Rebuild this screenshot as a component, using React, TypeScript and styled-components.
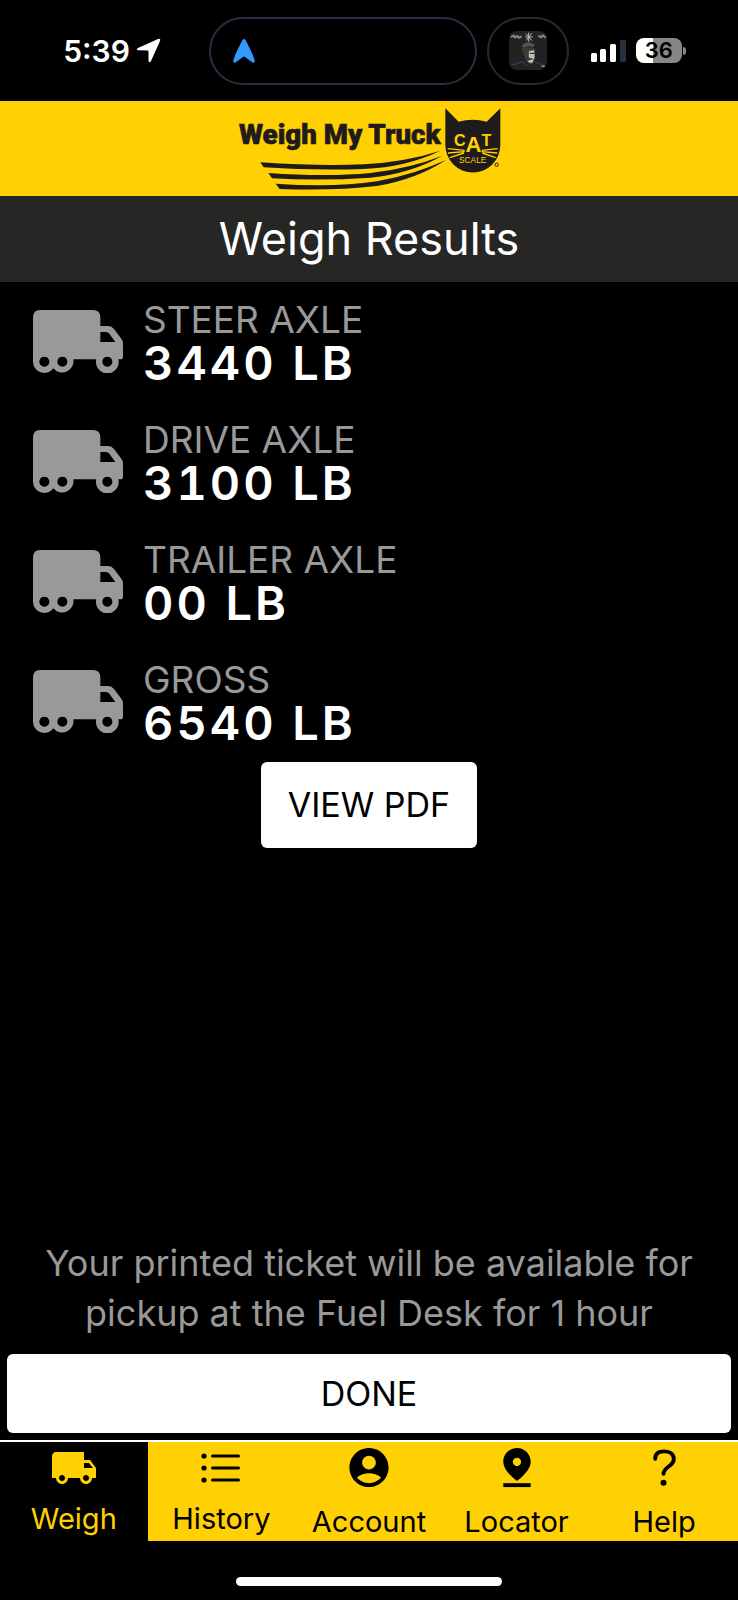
import { ReactNode } from "react";
import { MdAccountCircle, MdLocalShipping } from "react-icons/md";
import styled, { createGlobalStyle } from "styled-components";

const YELLOW = "#ffd103";

const GlobalStyle = createGlobalStyle`
  * {
    box-sizing: border-box;
    margin: 0;
    padding: 0;
  }
  body {
    background-color: #000;
    font-family: Inter, "Liberation Sans", sans-serif;
    color: #fff;
  }
  button {
    border: none;
    font-family: inherit;
    cursor: pointer;
  }
`;

const Screen = styled.div`
  min-height: 100vh;
  display: flex;
  flex-direction: column;
`;

const StatusBar = styled.div`
  display: grid;
  grid-template-columns: 5fr auto auto 4fr;
  align-items: center;
  gap: 10px;
  height: 101px;
`;

const StatusLeft = styled.div`
  display: flex;
  align-items: center;
  justify-content: flex-end;
  gap: 6px;
  padding-right: 38px;
  font-size: 30px;
  font-weight: 600;
`;

const StatusRight = styled.div`
  display: flex;
  align-items: center;
  gap: 10px;
  padding-left: 11px;
`;

const Pill = styled.div<{ $width: number; $border: string }>`
  display: flex;
  align-items: center;
  justify-content: ${(props) => (props.$width > 100 ? "flex-start" : "center")};
  width: ${(props) => props.$width}px;
  height: 68px;
  padding-left: ${(props) => (props.$width > 100 ? "22px" : "0")};
  border: 2px solid ${(props) => props.$border};
  border-radius: 34px;
`;

const Battery = styled.div`
  display: flex;
  align-items: center;
  gap: 1px;
`;

const BatteryLevel = styled.div`
  width: 46px;
  border-radius: 8px;
  background: linear-gradient(to right, #fff 36%, #868686 36%);
  color: #000;
  font-size: 22px;
  font-weight: 600;
  line-height: 25px;
  text-align: center;
`;

const BatteryTip = styled.div`
  width: 3px;
  height: 8px;
  border-radius: 0 4px 4px 0;
  background-color: #868686;
`;

const Brand = styled.header`
  display: flex;
  align-items: center;
  justify-content: center;
  height: 95px;
  background-color: ${YELLOW};
`;

const Title = styled.h1`
  background-color: #262625;
  font-size: 45px;
  font-weight: 400;
  line-height: 86px;
  text-align: center;
`;

const Main = styled.main`
  flex: 1;
  display: flex;
  flex-direction: column;
  padding: 16px 7px 7px;
`;

const Weights = styled.dl`
  display: flex;
  flex-direction: column;
  gap: 34px;
  padding-left: 26px;
`;

const WeightRow = styled.div`
  display: flex;
  align-items: center;
  gap: 20px;
`;

const WeightLabel = styled.dt`
  color: #999;
  font-size: 37px;
  line-height: 44px;
`;

const WeightValue = styled.dd`
  font-size: 47px;
  font-weight: 600;
  font-variant-numeric: tabular-nums;
  line-height: 42px;
  letter-spacing: 3px;
`;

const Button = styled.button`
  border-radius: 6px;
  background-color: #fff;
  color: #000;
  font-size: 34px;
`;

const PdfButton = styled(Button)`
  align-self: center;
  margin-top: 18px;
  padding: 0 27px;
  line-height: 86px;
`;

const DoneButton = styled(Button)`
  margin-top: 16px;
  line-height: 79px;
`;

const Note = styled.p`
  margin-top: auto;
  padding: 0 24px;
  color: #999;
  font-size: 36px;
  line-height: 50px;
  text-align: center;
`;

const Nav = styled.nav`
  display: flex;
  border-top: 2px solid #fff;
  background-color: ${YELLOW};
`;

const NavItem = styled.a<{ $active?: boolean; $gap: number }>`
  flex: 1 1 0;
  display: flex;
  flex-direction: column;
  align-items: center;
  gap: ${(props) => props.$gap}px;
  height: 99px;
  padding-top: 2px;
  background-color: ${(props) => (props.$active ? "#000" : YELLOW)};
  color: ${(props) => (props.$active ? YELLOW : "#000")};
  font-size: 29px;
  line-height: 38px;
  text-decoration: none;
`;

const HomeArea = styled.div`
  display: flex;
  justify-content: center;
  height: 59px;
  padding-top: 36px;
`;

const HomeBar = styled.div`
  width: 36%;
  height: 9px;
  border-radius: 5px;
  background-color: #fff;
`;

function TruckIcon() {
  return (
    <svg width="90" height="63" viewBox="0 0 270 189" fill="#999">
      <path
        fillRule="evenodd"
        d="M22 0H180Q202 0 202 22V48H226Q236 48 243 57L265 86Q270 92 270 99V140Q270 148 262 148H256A34 34 0 1 1 190 148H121A34 34 0 0 1 61 175A34 34 0 0 1 0 155V22Q0 0 22 0ZM202 66V96H247L229 71Q225 66 219 66ZM34 140a15 15 0 1 0 .1 0ZM88 140a15 15 0 1 0 .1 0ZM223 140a15 15 0 1 0 .1 0Z"
      />
    </svg>
  );
}

function Logo() {
  return (
    <svg width="264" height="84" viewBox="50 36 792 252" fill="#1f1b1c" role="img">
      <text
        x="56"
        y="148"
        fontFamily='Roboto, "Liberation Sans", sans-serif'
        fontSize="83"
        fontWeight="900"
        stroke="#1f1b1c"
        strokeWidth="2">
        Weigh My Truck
      </text>
      <path d="M120 202Q300 214 430 208Q560 200 660 167Q560 216 430 222Q280 227 130 217Z" />
      <path d="M144 234Q320 246 450 234Q570 220 666 182Q570 236 450 248Q300 258 155 250Z" />
      <path d="M166 266Q340 278 470 259Q590 236 678 194Q590 252 470 273Q340 288 178 282Z" />
      <path d="M675 40L715 80Q757 69 799 80L840 40V150A82 82 0 0 1 675 150Z" />
      <path
        d="M682 161L733 166M683 174L733 170M688 188L731 174M832 161L784 166M831 174L784 170M826 188L786 174"
        stroke={YELLOW}
        strokeWidth="4"
      />
      <g fill={YELLOW} fontFamily='"Liberation Sans", sans-serif'>
        <text x="757" y="153" fontSize="48" fontWeight="700" textAnchor="middle">
          C<tspan fontSize="66" dy="18">A</tspan>
          <tspan dy="-18">T</tspan>
        </text>
        <text x="757" y="203" fontSize="25" textAnchor="middle">
          SCALE
        </text>
      </g>
      <circle cx="829" cy="209" r="5" fill="none" stroke="#1f1b1c" strokeWidth="3" />
    </svg>
  );
}

function CoverArt() {
  return (
    <svg width="38" height="39" viewBox="0 0 114 117">
      <rect width="114" height="117" rx="24" fill="#222223" />
      <path d="M6 18l8-4 4 5 7-4 5 5 8-4M88 14l8 5 6-6 8 7" stroke="#8a8779" strokeWidth="6" fill="none" />
      <path d="M50 8l19 21M68 7L52 28M59 5v27M49 18h22" stroke="#bcbcb4" strokeWidth="3" />
      <path d="M38 44Q57 24 78 43L71 49Q57 41 45 51Z" fill="#55534b" />
      <path d="M38 54Q58 44 79 54L76 89L66 103L52 92Z" fill="#3b3a37" />
      <path d="M60 60l15-2 2 21-7 17-14-3 9-9-6-7Z" fill="#c2c0b8" />
      <path d="M62 67h13M60 84h11" stroke="#333" strokeWidth="4" />
      <path d="M10 102l30-10 14 12M78 93l24 9" stroke="#303a50" strokeWidth="5" fill="none" />
      <path d="M98 107l9-3" stroke="#aaa79b" strokeWidth="4" />
    </svg>
  );
}

function ListIcon() {
  return (
    <svg width="48" height="48" viewBox="0 0 48 48" fill="currentColor">
      {[12, 24, 36].map((y) => (
        <g key={y}>
          <circle cx="7" cy={y} r="2.6" />
          <rect x="14" y={y - 1.5} width="29" height="3" rx="1.5" />
        </g>
      ))}
    </svg>
  );
}

function PinIcon() {
  return (
    <svg width="48" height="48" viewBox="0 0 48 48" fill="currentColor">
      <path
        fillRule="evenodd"
        d="M24 4C16 4 10 10.500 10 18C10 28 24 37.500 24 37.500S38 28 38 18C38 10.500 32 4 24 4ZM24 14a4.200 4.200 0 1 1-.1 0Z"
      />
      <path d="M10 40h28v4H10z" />
    </svg>
  );
}

function HelpIcon() {
  return (
    <svg width="48" height="48" viewBox="0 0 48 48" fill="none">
      <path
        d="M15 15C15 10 18.500 7.500 24.500 7.500C30.500 7.500 34 10.500 34 15.500C34 23 23.500 23 23.500 30.500"
        stroke="currentColor"
        strokeWidth="4"
        strokeLinecap="round"
      />
      <circle cx="23.500" cy="39.500" r="3.100" fill="currentColor" />
    </svg>
  );
}

interface Weight {
  label: string;
  value: string;
}

const weights: Weight[] = [
  { label: "STEER AXLE", value: "3440 LB" },
  { label: "DRIVE AXLE", value: "3100 LB" },
  { label: "TRAILER AXLE", value: "00 LB" },
  { label: "GROSS", value: "6540 LB" },
];

interface Tab {
  label: string;
  icon: ReactNode;
  gap: number;
}

const tabs: Tab[] = [
  { label: "Weigh", icon: <MdLocalShipping size={48} />, gap: 8 },
  { label: "History", icon: <ListIcon />, gap: 8 },
  { label: "Account", icon: <MdAccountCircle size={48} />, gap: 12 },
  { label: "Locator", icon: <PinIcon />, gap: 12 },
  { label: "Help", icon: <HelpIcon />, gap: 12 },
];

function App() {
  return (
    <Screen>
      <GlobalStyle />
      <StatusBar>
        <StatusLeft>
          <span>5:39</span>
          <svg width="25" height="25" viewBox="0 0 25 25" fill="#fff">
            <path d="M22 1Q25 0 24 3L15 23Q13.500 25.500 12.500 23V13.500Q12.500 12.500 11.500 12.500L2 12.300Q-.5 11.500 2 10Z" />
          </svg>
        </StatusLeft>
        <Pill $width={268} $border="#273040">
          <svg width="22" height="24" viewBox="0 0 22 24" fill="#3399ff">
            <path d="M9.500 1Q11 -.8 12.500 1C16 8 19.500 14 21.700 21.500Q22 24.500 19.500 23.500L12 18Q11 17.200 10 18L2.500 23.500Q0 24.500 .3 21.500C2.500 14 6 8 9.500 1Z" />
          </svg>
        </Pill>
        <Pill $width={82} $border="#2a2a2a">
          <CoverArt />
        </Pill>
        <StatusRight>
          <svg width="36" height="24" viewBox="0 0 36 24" fill="#fff">
            <rect x="1" y="14" width="6" height="9" rx="1.500" />
            <rect x="10" y="10" width="6" height="13" rx="1.500" />
            <rect x="20" y="5" width="6" height="18" rx="1.500" />
            <rect x="30" y="1" width="6" height="22" rx="1.500" fill="#273040" />
          </svg>
          <Battery>
            <BatteryLevel>36</BatteryLevel>
            <BatteryTip />
          </Battery>
        </StatusRight>
      </StatusBar>
      <Brand>
        <Logo />
      </Brand>
      <Title>Weigh Results</Title>
      <Main>
        <Weights>
          {weights.map((weight) => (
            <WeightRow key={weight.label}>
              <TruckIcon />
              <div>
                <WeightLabel>{weight.label}</WeightLabel>
                <WeightValue>{weight.value}</WeightValue>
              </div>
            </WeightRow>
          ))}
        </Weights>
        <PdfButton type="button">VIEW PDF</PdfButton>
        <Note>
          Your printed ticket will be available for pickup at the Fuel Desk for 1 hour
        </Note>
        <DoneButton type="button">DONE</DoneButton>
      </Main>
      <Nav>
        {tabs.map((tab, index) => (
          <NavItem key={tab.label} href="#" $active={index === 0} $gap={tab.gap}>
            {tab.icon}
            <span>{tab.label}</span>
          </NavItem>
        ))}
      </Nav>
      <HomeArea>
        <HomeBar />
      </HomeArea>
    </Screen>
  );
}

export default App;
